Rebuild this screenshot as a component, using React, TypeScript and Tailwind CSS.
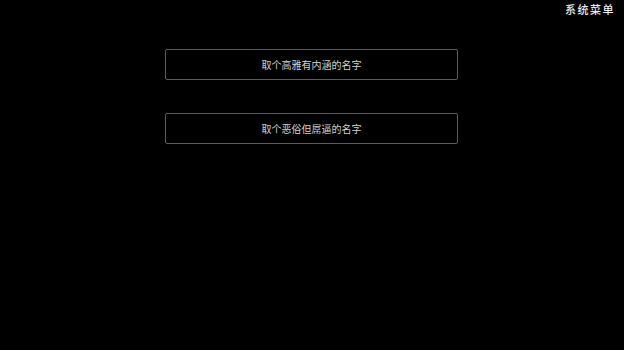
import React from 'react';

const font = { fontFamily: '"Noto Sans CJK SC", "Noto Sans", sans-serif' };

const buttons = ['取个高雅有内涵的名字', '取个恶俗但屌逼的名字'];

export default function App() {
  return (
    <div className="w-[624px] h-[350px] bg-black text-white relative overflow-hidden" style={font}>
      <div className="absolute top-[1px] right-[9px] text-[11px] font-medium tracking-[1.5px] text-[#ececec] leading-[16px]">
        系统菜单
      </div>
      <div className="flex flex-col items-start pl-[165px] pt-[49px] gap-[33px]">
        {buttons.map((b) => (
          <button
            key={b}
            className="w-[293px] h-[31px] border border-[#5a5a5a] rounded-[2px] bg-black text-[#d0d0d0] text-[10px] flex items-center justify-center"
          >
            {b}
          </button>
        ))}
      </div>
    </div>
  );
}
